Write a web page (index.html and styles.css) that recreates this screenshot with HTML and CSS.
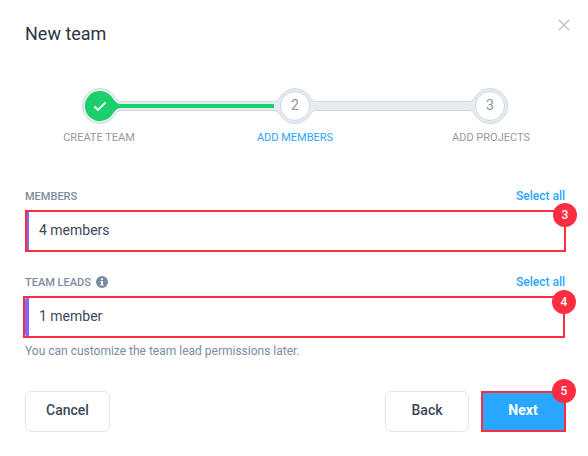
FILE: index.html
```html
<!doctype html>
<html lang="en">

<head>
    <meta charset="UTF-8">
    <title>New team</title>
    <link rel="stylesheet" href="styles.css">
</head>

<body>
    <div class="modal">
        <header class="modal-header">
            <h1>New team</h1>
            <svg class="close" width="12" height="12" viewBox="0 0 12 12">
                <path d="M0.7 0.7L11.3 11.3M11.3 0.7L0.7 11.3" />
            </svg>
        </header>

        <!-- Progress -->
        <div class="stepper">
            <svg class="track" width="540" height="36" viewBox="0 0 540 36">
                <path class="rail" d="M91 11Q93 13.500 96 13.500H249Q252 13.500 254 11A17.500 17.500 0 0 1 286 11Q288 13.500 291 13.500H444Q447 13.500 449 11A17.500 17.500 0 1 1 449 25Q447 22.500 444 22.500H291Q288 22.500 286 25A17.500 17.500 0 0 1 254 25Q252 22.500 249 22.500H96Q93 22.500 91 25A17.500 17.500 0 1 1 91 11Z" />
                <path class="done" d="M86.500 8.500Q91 16 95 16H249V20H95Q91 20 86.500 27.500A15 15 0 1 1 86.500 8.500Z" />
                <path class="check" d="M69.500 18.500L73 22L80.500 14.500" />
                <circle class="dot" cx="270" cy="18" r="14.500" />
                <circle class="dot" cx="465" cy="18" r="14.500" />
                <text x="270" y="22">2</text>
                <text x="465" y="22">3</text>
            </svg>
            <div class="steps">
                <span>CREATE TEAM</span>
                <span class="active">ADD MEMBERS</span>
                <span>ADD PROJECTS</span>
            </div>
        </div>

        <!-- Fields -->
        <div class="field">
            <div class="field-head">
                <label>MEMBERS</label>
                <a>Select all</a>
            </div>
            <div class="select">4 members
                <div class="mark mark-members"><span class="badge">3</span></div>
            </div>
        </div>
        <div class="field field-leads">
            <div class="field-head">
                <label>TEAM LEADS
                    <svg class="info" width="12" height="12" viewBox="0 0 12 12">
                        <circle cx="6" cy="6" r="6" />
                        <path d="M5 2.500h2V4H5zM4.500 5H7v3.500h.7v1H4.300v-1H5V6h-.5z" />
                    </svg>
                </label>
                <a>Select all</a>
            </div>
            <div class="select">1 member
                <div class="mark mark-leads"><span class="badge">4</span></div>
            </div>
            <p class="hint">You can customize the team lead permissions later.</p>
        </div>

        <footer class="actions">
            <button class="btn cancel">Cancel</button>
            <button class="btn back">Back</button>
            <button class="btn next">Next
                <span class="mark mark-next"><span class="badge">5</span></span>
            </button>
        </footer>
    </div>
</body>

</html>
```
FILE: styles.css
```css
* {
    box-sizing: border-box;
}

body {
    margin: 0;
    background: #fff;
    font-family: Roboto, "Liberation Sans", sans-serif;
    color: #3c4858;
}

.modal {
    width: 588px;
    height: 456px;
    padding: 18px 23px 0 25px;
}

.modal-header {
    display: flex;
    justify-content: space-between;
    height: 70px;
}

h1 {
    margin: 4px 0 0;
    font-size: 18px;
    line-height: 24px;
    font-weight: 400;
    color: #2b3442;
}

.close {
    margin: 0.5px -5px 0 0;
    fill: none;
    stroke: #c4c4c4;
    stroke-width: 1.5;
}

/* Stepper */

.stepper {
    width: 540px;
    height: 100px;
}

.track {
    display: block;
}

.rail {
    fill: #e6edf1;
    stroke: #ced9e4;
}

.done {
    fill: #1bd06c;
}

.check {
    fill: none;
    stroke: #fff;
    stroke-width: 1.8;
}

.dot {
    fill: #fff;
    stroke: #ced9e4;
}

.track text {
    font-size: 14px;
    text-anchor: middle;
    fill: #8796a5;
}

.steps {
    display: grid;
    grid-template-columns: 148px 244px 148px;
    margin-top: 7px;
    font-size: 11px;
    line-height: 14px;
    text-align: center;
    color: #999;
}

.steps .active {
    color: #2ba5ff;
}

/* Fields */

.field {
    width: 540px;
    height: 86px;
}

.field-leads {
    height: 117px;
}

.field-head {
    display: flex;
    justify-content: space-between;
    height: 23px;
    line-height: 16px;
}

label {
    display: flex;
    align-items: center;
    gap: 5px;
    height: 18px;
    font-size: 11px;
    font-weight: 500;
    color: #7c8ba1;
}

.info {
    margin-bottom: 2px;
    fill: #7c8ba1;
}

.info path {
    fill: #fff;
}

.field-head a {
    font-size: 12px;
    font-weight: 500;
    color: #2ba5ff;
}

.select {
    position: relative;
    height: 40px;
    padding-left: 10px;
    border-left: 4px solid #7b68ff;
    border-radius: 4px;
    font-size: 14px;
    line-height: 38px;
}

.hint {
    margin: 6px 0 0;
    font-size: 12px;
    line-height: 16px;
    color: #7c8ba1;
}

/* Buttons */

.actions {
    display: flex;
    width: 541px;
}

.btn {
    position: relative;
    height: 41px;
    padding: 0 0 4px;
    border: 1px solid #e3e6ef;
    border-radius: 6px;
    background: #fff;
    font: 500 14px Roboto, sans-serif;
    color: #3c4858;
}

.cancel {
    width: 85px;
}

.back {
    width: 84px;
    margin: 0 12px 0 auto;
}

.next {
    width: 85px;
    padding-right: 1px;
    border: 0;
    border-radius: 0;
    background: #29a6ff;
    color: #fff;
    font-weight: 700;
}

/* Numbered highlights */

.mark {
    position: absolute;
    border: 2px solid #ff2d3f;
}

.mark-members {
    top: -1px;
    left: -4px;
    width: 541px;
    height: 42px;
}

.mark-leads {
    top: -1px;
    left: -6px;
    width: 542px;
    height: 42px;
}

.mark-next {
    inset: 0;
}

.badge {
    position: absolute;
    top: -9px;
    right: -13px;
    width: 24px;
    height: 24px;
    border-radius: 50%;
    background: #ff2d3f;
    color: #fff;
    font-size: 12px;
    line-height: 24px;
    font-weight: 500;
    text-align: center;
}

.mark-leads .badge {
    top: -8px;
}

.mark-next .badge {
    top: -14px;
    right: -12px;
}
```
